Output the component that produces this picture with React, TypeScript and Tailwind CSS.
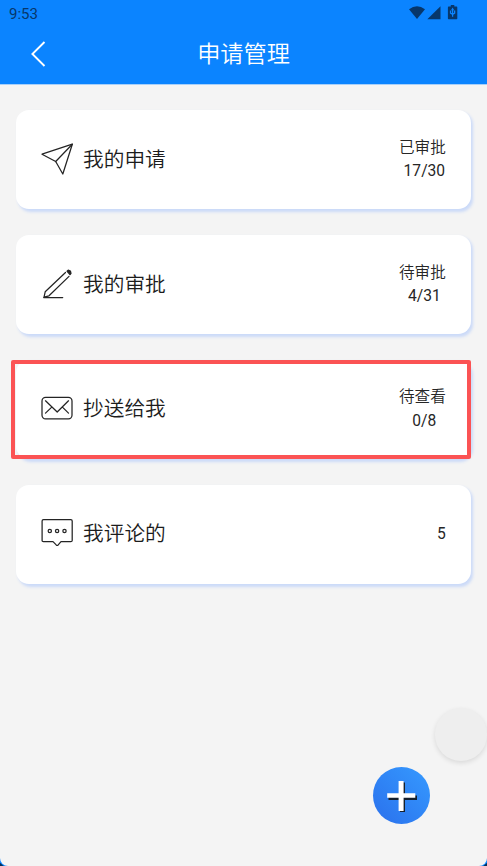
import type { ReactNode } from 'react';

type Item = {
  title: string;
  label?: string;
  value: string;
  icon: ReactNode;
  highlighted?: boolean;
};

const iconProps = {
  width: 32,
  height: 32,
  viewBox: '0 0 32 32',
  fill: 'none',
  stroke: '#242424',
  strokeWidth: 1.25,
  strokeLinecap: 'round' as const,
  strokeLinejoin: 'round' as const,
};

const SendIcon = () => (
  <svg {...iconProps}>
    <path d="M1 11.2 31.3 1.2 21.8 31 14.7 18.5Z" />
    <path d="M31.3 1.2 14.7 18.5" />
  </svg>
);

const EditIcon = () => (
  <svg {...iconProps}>
    <path d="M24.5 4.5 4.2 23.8 3 29.2 8 27.8 28 8.4" />
    <path d="M2.7 29.5H21.7" />
    <path d="M26 3.2 27.2 2.2 29.4 3 30 5.4 29 6.7Z" fill="#242424" />
  </svg>
);

const MailIcon = () => (
  <svg {...iconProps}>
    <rect x="1" y="5.3" width="30" height="21.6" rx="3.6" />
    <path d="M4.5 8.8 16.2 20 27.5 8.8M4.5 21.1 10.5 15.4M21.7 15.4 27.5 21.1" />
  </svg>
);

const CommentIcon = () => (
  <svg {...iconProps}>
    <path d="M2.5 2.7H29.8Q31.2 2.7 31.2 4.1V23.4Q31.2 24.6 29.8 24.6H20L17.2 27.9Q16.2 28.7 15.2 27.9L12 24.6H2.5Q1.1 24.6 1.1 23.4V4.1Q1.1 2.7 2.5 2.7Z" />
    <circle cx="8.8" cy="13.9" r="1.65" />
    <circle cx="16.1" cy="13.9" r="1.65" />
    <circle cx="23.5" cy="13.9" r="1.65" />
  </svg>
);

const items: Item[] = [
  { title: '我的申请', label: '已审批', value: '17/30', icon: <SendIcon /> },
  { title: '我的审批', label: '待审批', value: '4/31', icon: <EditIcon /> },
  { title: '抄送给我', label: '待查看', value: '0/8', icon: <MailIcon />, highlighted: true },
  { title: '我评论的', value: '5', icon: <CommentIcon /> },
];

function StatusBar() {
  return (
    <div className="flex h-[26px] items-center justify-between pr-[28px] pl-[9px] text-[#07376b]">
      <span className="mt-[3px] text-[15px] leading-none font-[450]">9:53</span>
      <svg width="50" height="16" viewBox="0 0 50 16" fill="currentColor">
        <path d="M0 4.3Q8-2 16 4.3L8 14Z" />
        <path d="M31.5 1.2V14.2H18.3Z" />
        <path
          fillRule="evenodd"
          d="M39.6 1.6H41.8V0H45.3V1.6H47.6Q48.3 1.6 48.3 2.4V13.5Q48.3 14.2 47.6 14.2H39.6Q38.9 14.2 38.9 13.5V2.4Q38.9 1.6 39.6 1.6ZM43.6 2.6 42 5.2H43V8H42.2V5.6H40.9V8.6L43 9.8V11.8H44.2V9.8L46.3 8.6V5.6H45V8H44.2V5.2H45.2Z"
        />
      </svg>
    </div>
  );
}

function Card({ item }: { item: Item }) {
  return (
    <div className="relative flex h-[98.8px] items-center rounded-[13px] bg-white pr-[25.2px] pl-[25px] shadow-[2px_2.5px_3px_#cbdaf8]">
      <span className="mb-[2px] shrink-0">{item.icon}</span>
      <span className="ml-[10px] text-[20.7px] leading-[30px] font-[350] text-[#1c1c1c]">{item.title}</span>
      <div className="ml-auto text-center text-[15.6px] leading-[24px] text-[#262626]">
        {item.label && <div className="font-[350]">{item.label}</div>}
        <div className={item.label ? '-mt-[0.7px] mb-[0.7px] whitespace-pre' : ''}>
          {item.label ? `\u00a0${item.value}` : item.value}
        </div>
      </div>
      {item.highlighted && (
        <div className="absolute top-0 right-0 bottom-0 -left-[5px] rounded-[2px] border-4 border-[#fb5354]" />
      )}
    </div>
  );
}

export default function App() {
  return (
    <div className="relative h-[866px] w-[487px] overflow-hidden bg-[#082f55] font-[Roboto,'Noto_Sans_CJK_SC',sans-serif]">
      <div className="flex h-full flex-col overflow-hidden rounded-b-[8px] bg-[#f4f4f4] shadow-[0_0_0_1px_#0b84ff]">
        <header className="h-[84px] shrink-0 bg-[#0b84ff] shadow-[0_1px_0_#a8d0fa]">
          <StatusBar />
          <div className="grid h-[56px] grid-cols-[60px_1fr_60px] items-center text-white">
            <svg className="ml-[30px]" width="17" height="26" viewBox="0 0 17 26" fill="none" stroke="currentColor" strokeWidth="1.9">
              <path d="M14.5 1 2.4 13 14.5 25" />
            </svg>
            <h1 className="text-center text-[23.2px] leading-[34px] font-[350]">申请管理</h1>
          </div>
        </header>
        <main className="flex flex-col gap-[26px] pt-[26.4px] pr-[16px] pl-[16px]">
          {items.map((item) => (
            <Card key={item.title} item={item} />
          ))}
        </main>
      </div>
      <div className="absolute top-[708px] left-[434.5px] size-[52.5px] rounded-full bg-[#eeeeee] shadow-[0_2px_5px_#0000001c]" />
      <button className="absolute top-[767.3px] left-[373px] size-[57px] rounded-full bg-linear-to-tr from-[#2b70ec] to-[#369aff]">
        <svg width="57" height="57" viewBox="0 0 57 57">
          <path d="M27 15.5h5v13h12v4.5H32v12h-5v-12H15.5V28.5H27Z" fill="#15202d" />
          <path d="M25.6 14h5v12.2H42.3v4.6H30.6V44h-5V30.8H14.2V26.2H25.6Z" fill="white" />
        </svg>
      </button>
    </div>
  );
}
